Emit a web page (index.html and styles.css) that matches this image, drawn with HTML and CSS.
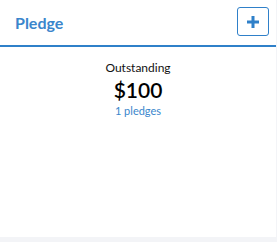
FILE: index.html
```html
<!DOCTYPE html>
<html>
<head>
<meta charset="utf-8">
<link rel="stylesheet" href="styles.css">
</head>
<body>
<div class="card">
  <div class="card-header">
    <h2 class="title">Pledge</h2>
    <button class="add-btn" aria-label="Add pledge">
      <svg width="14" height="14" viewBox="0 0 14 14"><path d="M7 1v12M1 7h12" stroke="#2f80c9" stroke-width="3" fill="none"/></svg>
    </button>
  </div>
  <div class="card-body">
    <div class="label">Outstanding</div>
    <div class="amount">$100</div>
    <div class="count">1 pledges</div>
  </div>
</div>
</body>
</html>
```
FILE: styles.css
```css
html, body {
  margin: 0;
  padding: 0;
  background: #f3f4f7;
  font-family: Lato, "Open Sans", sans-serif;
}
.card {
  width: 276px;
  height: 237px;
  background: #fff;
  box-sizing: border-box;
}
.card-header {
  display: flex;
  align-items: center;
  justify-content: space-between;
  height: 45px;
  box-sizing: content-box;
  border-bottom: 2px solid #2f80c9;
  padding: 0 7px 0 15px;
}
.title {
  margin: 0;
  font-size: 16px;
  font-weight: 700;
  color: #3a86cc;
}
.add-btn {
  width: 32px;
  height: 29px;
  margin-top: -2px;
  border: 1px solid #2f80c9;
  border-radius: 3px;
  background: #fff;
  padding: 0;
  display: flex;
  align-items: center;
  justify-content: center;
}
.card-body {
  display: flex;
  flex-direction: column;
  align-items: center;
  padding-top: 13px;
}
.label {
  font-size: 12px;
  color: #111;
  line-height: 16px;
}
.amount {
  font-size: 21px;
  color: #000;
  line-height: 28px;
  font-weight: 600;
}
.count {
  font-size: 11px;
  color: #3a86cc;
  line-height: 14px;
}
```
